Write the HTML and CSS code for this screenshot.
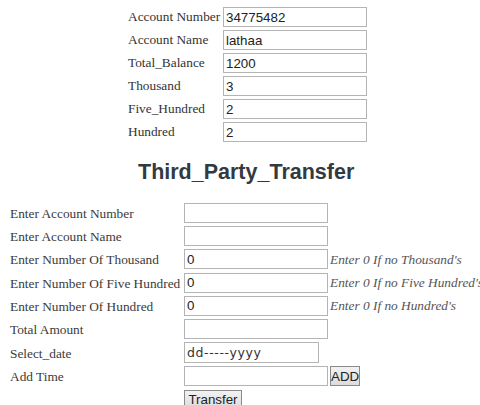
FILE: index.html
```html
<!DOCTYPE html>
<html>
<head>
<meta charset="utf-8">
<title>Third Party Transfer</title>
<link rel="stylesheet" href="styles.css">
</head>
<body>
<div class="page">
  <form class="account">
    <label class="lbl">Account Number</label><input class="field" type="text" value="34775482">
    <label class="lbl">Account Name</label><input class="field" type="text" value="lathaa">
    <label class="lbl">Total_Balance</label><input class="field" type="text" value="1200">
    <label class="lbl">Thousand</label><input class="field" type="text" value="3">
    <label class="lbl">Five_Hundred</label><input class="field" type="text" value="2">
    <label class="lbl">Hundred</label><input class="field" type="text" value="2">
  </form>

  <h2 class="title">Third_Party_Transfer</h2>

  <form class="transfer">
    <label class="lbl">Enter Account Number</label><input class="field" type="text"><span></span>
    <label class="lbl">Enter Account Name</label><input class="field" type="text"><span></span>
    <label class="lbl">Enter Number Of Thousand</label><input class="field" type="text" value="0"><em class="hint">Enter 0 If no Thousand's</em>
    <label class="lbl">Enter Number Of Five Hundred</label><input class="field" type="text" value="0"><em class="hint">Enter 0 If no Five Hundred's</em>
    <label class="lbl">Enter Number Of Hundred</label><input class="field" type="text" value="0"><em class="hint">Enter 0 If no Hundred's</em>
    <label class="lbl">Total Amount</label><input class="field" type="text"><span></span>
    <label class="lbl">Select_date</label><input class="field date" type="text" value="dd-----yyyy"><span></span>
    <label class="lbl">Add Time</label>
    <div class="time-cell"><input class="field" type="text"><button class="btn btn-add" type="button">ADD</button></div>
    <span></span>
    <span></span><div><button class="btn btn-send" type="button">Transfer</button></div><span></span>
  </form>
</div>
</body>
</html>
```

FILE: styles.css
```css
html, body {
  margin: 0;
  padding: 0;
  overflow: hidden;
  background: #ffffff;
}

body {
  font-family: "Liberation Serif", "Times New Roman", serif;
  font-size: 13.33px;
  color: #333333;
}

.page {
  width: 478px;
  margin-left: 8px;
  padding-top: 7px;
}

.account {
  display: grid;
  grid-template-columns: 95px 144px;
  row-gap: 3px;
  align-items: center;
  width: 239px;
  margin: 0 auto 0 120px;
}

.lbl {
  white-space: nowrap;
  line-height: 20px;
}

.field {
  box-sizing: border-box;
  width: 144px;
  height: 20px;
  margin: 0;
  padding: 0 2px;
  border: 1px solid #b4b4b4;
  background: #ffffff;
  font-family: "Liberation Sans", Arial, sans-serif;
  font-size: 13.33px;
  color: #222222;
  outline: none;
}

.title {
  margin: 18px 0 0;
  height: 43px;
  padding-left: 130px;
  font-family: "Liberation Sans", Arial, sans-serif;
  font-size: 21.5px;
  font-weight: bold;
  color: #333a3f;
  line-height: 25px;
}

.transfer {
  display: grid;
  grid-template-columns: 174px 146px auto;
  row-gap: 3.2px;
  align-items: center;
  padding-left: 2px;
}

.transfer .lbl {
  color: #3a3a3a;
  padding-top: 2px;
  line-height: 18px;
}

.hint {
  white-space: nowrap;
  font-style: italic;
  color: #555555;
  padding-top: 1px;
}

.date {
  width: 135px;
  height: 21px;
  font-family: "DejaVu Sans", sans-serif;
  font-size: 12.5px;
  letter-spacing: 0.6px;
  color: #333333;
}

.time-cell {
  display: flex;
  gap: 2px;
  white-space: nowrap;
}

.btn {
  box-sizing: border-box;
  height: 20px;
  margin: 0;
  border: 1px solid #8a8a8a;
  border-radius: 0;
  background: linear-gradient(#f2f2f2, #dcdcdc);
  font-family: "Liberation Sans", Arial, sans-serif;
  font-size: 13.33px;
  color: #222222;
}

.btn-add {
  width: 31px;
  padding: 0;
}

.btn-send {
  width: 58px;
  padding: 0;
}
```
